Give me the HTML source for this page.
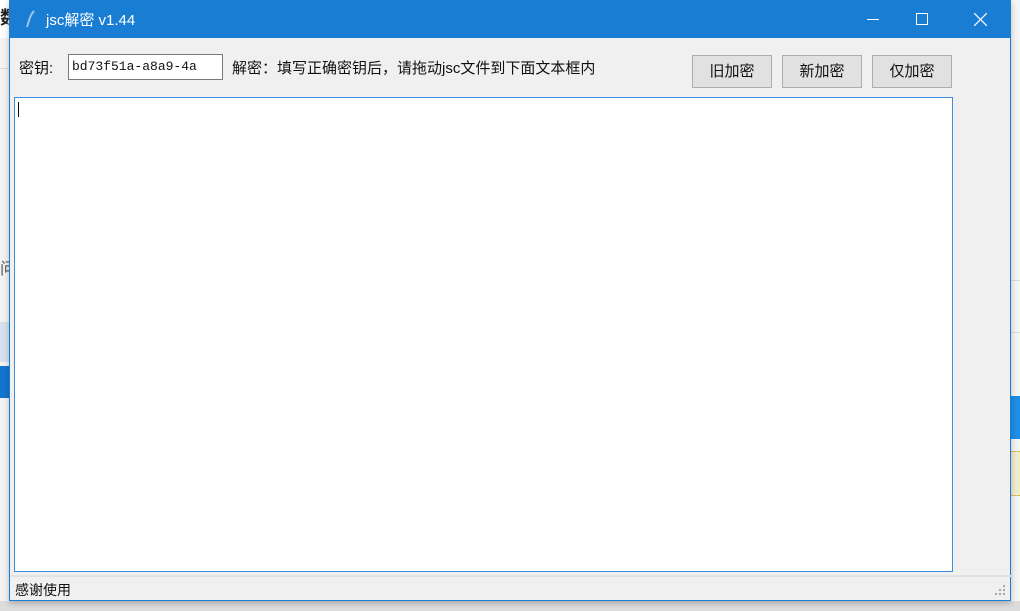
<!DOCTYPE html><html><head><meta charset="utf-8"><style>
*{margin:0;padding:0;box-sizing:border-box}
body{width:1020px;height:611px;overflow:hidden;background:#e9e9e9;position:relative;font-family:"Liberation Sans","Noto Sans CJK SC",sans-serif;font-size:14px;color:#111}
.a{position:absolute}
.btn{position:absolute;top:55px;width:80px;height:33px;background:#e1e1e1;border:1px solid #adadad;text-align:center;line-height:31px;font-size:15px}
</style></head><body>
<div class="a" style="left:0;top:0;width:9px;height:611px;background:#f3f3f3"></div>
<div class="a" style="left:0;top:0;width:12px;height:38px;background:#fff;font-size:18px;font-weight:bold;line-height:36px;color:#222">数</div>
<div class="a" style="left:0;top:68px;width:9px;height:1px;background:#ddd"></div>
<div class="a" style="left:0;top:255px;font-size:16px;color:#555">问</div>
<div class="a" style="left:0;top:322px;width:9px;height:40px;background:#d6e3ee"></div>
<div class="a" style="left:0;top:366px;width:9px;height:32px;background:#1176d0"></div>
<div class="a" style="left:1010px;top:0;width:10px;height:611px;background:#f5f5f5"></div>
<div class="a" style="left:1010px;top:280px;width:10px;height:1px;background:#ddd"></div>
<div class="a" style="left:1010px;top:332px;width:10px;height:1px;background:#ddd"></div>
<div class="a" style="left:1010px;top:396px;width:10px;height:43px;background:#1e8fe4"></div>
<div class="a" style="left:1010px;top:451px;width:10px;height:45px;background:#f2eccc;border-top:1px dashed #d9b44a;border-bottom:1px dashed #d9b44a"></div>
<div class="a" style="left:0;top:601px;width:1020px;height:10px;background:#dcdcdc"></div>
<!-- window -->
<div class="a" style="left:9px;top:0;width:1002px;height:601px;background:#f0f0f0;border:1px solid #1a7fd4;border-top:none;box-shadow:0 2px 6px rgba(0,0,0,.25)">
 <div class="a" style="left:0;top:0;width:1001px;height:38px;background:#1a7dd4;color:#fff">
  <svg class="a" style="left:14px;top:9px" width="14" height="20"><path d="M10 2 C6 6 5 12 3 18" stroke="#9fc3e6" stroke-width="2" fill="none"/></svg>
  <div class="a" style="left:36px;top:9px;font-size:15px">jsc解密 v1.44</div>
  <div class="a" style="left:857px;top:19px;width:12px;height:1px;background:#fff"></div>
  <div class="a" style="left:906px;top:13px;width:12px;height:12px;border:1px solid #fff"></div>
  <svg class="a" style="left:964px;top:13px" width="13" height="13"><path d="M0 0L13 13M13 0L0 13" stroke="#fff" stroke-width="1.2"/></svg>
 </div>
 <div class="a" style="left:9px;top:57px;font-size:15px">密钥:</div>
 <div class="a" style="left:58px;top:54px;width:155px;height:26px;background:#fff;border:1px solid #7a7a7a;font-family:'Liberation Mono','DejaVu Sans Mono',monospace;font-size:13px;line-height:24px;padding-left:3px">bd73f51a-a8a9-4a</div>
 <div class="a" style="left:222px;top:57px;font-size:15px">解密：填写正确密钥后，请拖动jsc文件到下面文本框内</div>
 <div class="btn" style="left:682px">旧加密</div>
 <div class="btn" style="left:772px">新加密</div>
 <div class="btn" style="left:862px">仅加密</div>
 <div class="a" style="left:4px;top:97px;width:939px;height:475px;background:#fff;border:1px solid #3d8ee0"></div>
 <div class="a" style="left:8px;top:102px;width:1px;height:15px;background:#000"></div>
 <div class="a" style="left:0;top:575px;width:1001px;height:2px;background:#e2e2e2"></div>
 <div class="a" style="left:5px;top:580px;font-size:14px">感谢使用</div>
 <svg class="a" style="left:983px;top:584px" width="14" height="14" fill="#aaa"><rect x="10" y="1" width="2" height="2"/><rect x="6" y="5" width="2" height="2"/><rect x="10" y="5" width="2" height="2"/><rect x="2" y="9" width="2" height="2"/><rect x="6" y="9" width="2" height="2"/><rect x="10" y="9" width="2" height="2"/></svg>
</div>
</body></html>
